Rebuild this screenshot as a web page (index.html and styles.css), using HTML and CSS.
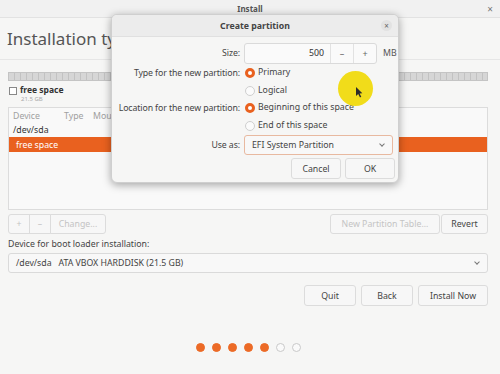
FILE: index.html
```html
<!DOCTYPE html>
<html lang="en">
<head>
    <meta charset="UTF-8">
    <title>Install</title>
    <link rel="stylesheet" href="styles.css">
</head>
<body>
    <div class="window">
        <div class="titlebar">
            <span class="title">Install</span>
            <span class="close">&#215;</span>
        </div>
        <div class="header">Installation type</div>
        <div class="content">
            <div class="diskbar"></div>
            <div class="legend">
                <span class="check"></span>
                <div>
                    <div class="legend-name">free space</div>
                    <div class="legend-size">21.5 GB</div>
                </div>
            </div>
            <div class="table">
                <div class="row head">
                    <span class="c-dev">Device</span><span class="c-type">Type</span><span class="c-mount">Mount point</span>
                </div>
                <div class="row">
                    <span class="c-dev">/dev/sda</span>
                </div>
                <div class="row selected">
                    <span class="c-dev indent">free space</span>
                </div>
            </div>
            <div class="tools">
                <div class="group">
                    <button class="btn small" disabled>+</button><button class="btn small" disabled>&#8211;</button><button class="btn change" disabled>Change...</button>
                </div>
                <div class="group">
                    <button class="btn newtable" disabled>New Partition Table...</button>
                    <button class="btn revert">Revert</button>
                </div>
            </div>
            <div class="boot-label">Device for boot loader installation:</div>
            <div class="combo wide">
                <span>/dev/sda&nbsp;&nbsp;&nbsp;ATA VBOX HARDDISK (21.5 GB)</span>
                <span class="chev"></span>
            </div>
            <div class="actions">
                <button class="btn act">Quit</button>
                <button class="btn act">Back</button>
                <button class="btn act install">Install Now</button>
            </div>
            <div class="dots">
                <span class="dot on"></span><span class="dot on"></span><span class="dot on"></span><span class="dot on"></span><span class="dot on"></span><span class="dot"></span><span class="dot"></span>
            </div>
        </div>

        <div class="dialog">
            <div class="dlg-head">
                <span>Create partition</span>
                <span class="dlg-close">&#215;</span>
            </div>
            <div class="form">
                <label class="lbl">Size:</label>
                <div class="size-row">
                    <div class="spin">
                        <span class="spin-val">500</span>
                        <span class="spin-btn">&#8211;</span>
                        <span class="spin-btn">+</span>
                    </div>
                    <span class="unit">MB</span>
                </div>

                <label class="lbl">Type for the new partition:</label>
                <div class="radio checked">Primary</div>
                <span></span>
                <div class="radio">Logical</div>

                <label class="lbl">Location for the new partition:</label>
                <div class="radio checked">Beginning of this space</div>
                <span></span>
                <div class="radio">End of this space</div>

                <label class="lbl">Use as:</label>
                <div class="combo focus">
                    <span>EFI System Partition</span>
                    <span class="chev"></span>
                </div>
            </div>
            <div class="dlg-buttons">
                <button class="btn dlg-btn">Cancel</button>
                <button class="btn dlg-btn">OK</button>
            </div>
        </div>

        <div class="pointer">
            <svg width="8" height="12" viewBox="0 0 8 12">
                <path d="M1 1 L1 10 L3.2 8 L5 11.5 L6.3 10.8 L4.6 7.5 L7.3 7.3 Z" fill="#2b2b2b"/>
            </svg>
        </div>
    </div>
</body>
</html>
```

FILE: styles.css
```css
body {
    margin: 0;
    font-family: "Noto Sans", "DejaVu Sans", sans-serif;
    font-size: 8.75px;
    color: #3c3c3c;
    background: #f6f6f5;
}
.window {
    position: relative;
    width: 500px;
    height: 374px;
    overflow: hidden;
    background: #f6f6f5;
}
.titlebar {
    height: 17px;
    border-bottom: 1px solid #e2e2e2;
    background: #f1f1f1;
    display: flex;
    align-items: center;
    justify-content: center;
    position: relative;
}
.title {
    font-weight: bold;
    color: #555;
    font-size: 8px;
}
.close {
    position: absolute;
    right: 7px;
    top: 2px;
    font-size: 10px;
    color: #777;
}
.header {
    height: 41px;
    border-bottom: 1px solid #e6e6e6;
    font-size: 17px;
    color: #555;
    padding-left: 7px;
    display: flex;
    align-items: center;
}
.content {
    padding: 12px 12px 0 8px;
}
.diskbar {
    height: 7px;
    border: 1px solid #c4c4c4;
    background-color: #d6d6d6;
    background-image: repeating-linear-gradient(90deg, transparent 0, transparent 5px, #c2c2c2 5px, #c2c2c2 6px);
}
.legend {
    display: flex;
    gap: 3px;
    margin-top: 4px;
    padding-left: 1px;
}
.check {
    width: 6px;
    height: 6px;
    border: 1px solid #888;
    margin-top: 2px;
    background: #fff;
}
.legend-name {
    font-weight: bold;
    font-size: 8.5px;
    color: #333;
    line-height: 10px;
}
.legend-size {
    font-size: 6px;
    color: #aaa;
    line-height: 9px;
    padding-left: 1px;
}
.table {
    margin-top: 3px;
    height: 100px;
    border: 1px solid #dcdcdc;
    background: #f9f9f9;
    padding-top: 1px;
}
.row {
    height: 14px;
    display: flex;
    align-items: center;
    padding-left: 4px;
    color: #333;
}
.row.head {
    color: #a0a0a0;
}
.c-dev {
    width: 51px;
}
.c-type {
    width: 29px;
}
.c-mount {
    width: 20px;
    overflow: hidden;
    white-space: nowrap;
}
.row.selected {
    background: #e9611f;
    color: #fff;
    height: 15px;
}
.indent {
    padding-left: 3px;
}
.tools {
    display: flex;
    justify-content: space-between;
    margin-top: 4px;
}
.group {
    display: flex;
}
.btn {
    font-family: inherit;
    font-size: 8.75px;
    color: #444;
    background: #f7f7f7;
    border: 1px solid #dcdcdc;
    border-radius: 3px;
    height: 20px;
    padding: 0;
    margin: 0;
}
.btn:disabled {
    color: #c4c4c4;
}
.btn.small {
    width: 22px;
    border-radius: 0;
    margin-right: -1px;
}
.btn.small:first-child {
    border-radius: 3px 0 0 3px;
}
.btn.change {
    width: 56px;
    border-radius: 0 3px 3px 0;
}
.btn.newtable {
    width: 110px;
}
.btn.revert {
    width: 47px;
    margin-left: 1px;
}
.boot-label {
    margin-top: 3px;
    color: #444;
    line-height: 14px;
}
.combo {
    display: flex;
    align-items: center;
    justify-content: space-between;
    height: 18px;
    border: 1px solid #dadada;
    border-radius: 3px;
    background: #f8f8f8;
    padding: 0 8px 0 7px;
    color: #444;
}
.combo.wide {
    margin-top: 2px;
}
.chev {
    width: 3px;
    height: 3px;
    border-right: 1px solid #777;
    border-bottom: 1px solid #777;
    transform: rotate(45deg);
    margin-top: -3px;
}
.actions {
    display: flex;
    justify-content: flex-end;
    gap: 5px;
    margin-top: 12px;
}
.btn.act {
    width: 52px;
    height: 21px;
}
.btn.install {
    width: 70px;
}
.dots {
    display: flex;
    justify-content: center;
    gap: 7px;
    margin-top: 37px;
}
.dot {
    width: 7px;
    height: 7px;
    border: 1px solid #c9c9c9;
    border-radius: 50%;
    background: #fafafa;
}
.dot.on {
    background: #ec6a26;
    border-color: #ec6a26;
}
.dialog {
    position: absolute;
    left: 111px;
    top: 14px;
    width: 286px;
    height: 167px;
    background: #f6f6f5;
    border: 1px solid #cfcfcf;
    border-radius: 6px;
    box-shadow: 0 2px 8px rgba(0, 0, 0, 0.35);
    overflow: hidden;
}
.dlg-head {
    height: 21px;
    background: #ececec;
    border-bottom: 1px solid #e0e0e0;
    display: flex;
    align-items: center;
    justify-content: center;
    font-weight: bold;
    color: #444;
    position: relative;
}
.dlg-close {
    position: absolute;
    right: 6px;
    top: 5px;
    width: 11px;
    height: 11px;
    border-radius: 50%;
    background: #e2e2e2;
    font-size: 8px;
    line-height: 11px;
    text-align: center;
    color: #666;
    font-weight: normal;
}
.form {
    display: grid;
    grid-template-columns: 128px 1fr;
    column-gap: 4px;
    row-gap: 0;
    padding: 5px 4px 0 0;
    align-items: center;
}
.lbl {
    justify-self: end;
    white-space: nowrap;
    letter-spacing: -0.1px;
    color: #444;
}
.size-row {
    display: flex;
    align-items: center;
    gap: 6px;
    height: 22px;
}
.spin {
    display: flex;
    align-items: center;
    width: 131px;
    height: 19px;
    border: 1px solid #dadada;
    border-radius: 3px;
    background: #fafafa;
}
.spin-val {
    flex: 1;
    text-align: right;
    padding-right: 6px;
    color: #333;
}
.spin-btn {
    width: 22px;
    height: 19px;
    line-height: 19px;
    text-align: center;
    border-left: 1px solid #e2e2e2;
    color: #666;
    font-size: 9px;
}
.unit {
    color: #555;
}
.radio {
    position: relative;
    height: 17.5px;
    line-height: 17.5px;
    padding-left: 14px;
    color: #444;
}
.radio::before {
    content: "";
    position: absolute;
    left: 1px;
    top: 4px;
    width: 8px;
    height: 8px;
    border: 1px solid #cfcfcf;
    border-radius: 50%;
    background: #fbfbfb;
}
.radio.checked::before {
    width: 4px;
    height: 4px;
    border: 3px solid #e9611f;
    background: #fff;
}
.combo.focus {
    margin-top: 1px;
    height: 18px;
    border-color: #e8b9a0;
    width: 132px;
}
.dlg-buttons {
    display: flex;
    justify-content: flex-end;
    gap: 4px;
    padding: 3px 3px 0 0;
}
.btn.dlg-btn {
    width: 50px;
    height: 21px;
}
.pointer {
    position: absolute;
    left: 338px;
    top: 71px;
    width: 35px;
    height: 35px;
    border-radius: 50%;
    background: #f1dc1a;
}
.pointer svg {
    position: absolute;
    left: 17px;
    top: 15px;
}
```
